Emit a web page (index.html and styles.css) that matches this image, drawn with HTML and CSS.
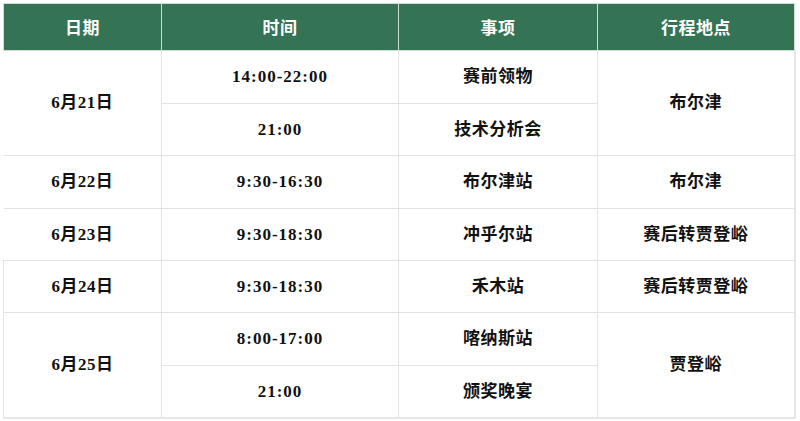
FILE: index.html
```html
<!DOCTYPE html>
<html lang="zh">
<head>
<meta charset="utf-8">
<link rel="stylesheet" href="styles.css">
</head>
<body>
<table class="schedule">
  <colgroup>
    <col class="c-date">
    <col class="c-time">
    <col class="c-item">
    <col class="c-place">
  </colgroup>
  <thead>
    <tr class="head">
      <th>日期</th>
      <th>时间</th>
      <th>事项</th>
      <th>行程地点</th>
    </tr>
  </thead>
  <tbody>
    <tr class="tall">
      <td rowspan="2" class="date">6月21日</td>
      <td class="time">14:00-22:00</td>
      <td>赛前领物</td>
      <td rowspan="2" class="place">布尔津</td>
    </tr>
    <tr>
      <td class="time">21:00</td>
      <td>技术分析会</td>
    </tr>
    <tr class="tall">
      <td class="date">6月22日</td>
      <td class="time">9:30-16:30</td>
      <td>布尔津站</td>
      <td class="place">布尔津</td>
    </tr>
    <tr>
      <td class="date">6月23日</td>
      <td class="time">9:30-18:30</td>
      <td>冲乎尔站</td>
      <td class="place">赛后转贾登峪</td>
    </tr>
    <tr>
      <td class="date edge">6月24日</td>
      <td class="time">9:30-18:30</td>
      <td>禾木站</td>
      <td class="place">赛后转贾登峪</td>
    </tr>
    <tr class="tall">
      <td rowspan="2" class="date edge last">6月25日</td>
      <td class="time">8:00-17:00</td>
      <td>喀纳斯站</td>
      <td rowspan="2" class="place last">贾登峪</td>
    </tr>
    <tr class="final">
      <td class="time">21:00</td>
      <td>颁奖晚宴</td>
    </tr>
  </tbody>
</table>
</body>
</html>
```
FILE: styles.css
```css
html, body {
  margin: 0;
  padding: 0;
  background: #ffffff;
}

body {
  padding: 3px 0 0 3px;
}

.schedule {
  border-collapse: collapse;
  table-layout: fixed;
  width: 791px;
  font-family: "Liberation Serif", "Noto Sans CJK SC", serif;
  font-size: 17px;
  font-weight: bold;
  color: #111111;
}

.c-date { width: 158px; }
.c-time { width: 237px; }
.c-item { width: 199px; }
.c-place { width: 197px; }

.head th {
  height: 46px;
  padding: 0;
  background: #347454;
  color: #ffffff;
  font-family: "Noto Sans CJK SC", sans-serif;
  font-weight: bold;
  font-size: 17px;
  line-height: 20px;
  letter-spacing: 0.5px;
  text-align: center;
  vertical-align: middle;
  border: 1px solid #cfdfd5;
}

.schedule td {
  padding: 0;
  height: 51px;
  text-align: center;
  vertical-align: middle;
  line-height: 20px;
  letter-spacing: 0.5px;
  border: 1px solid #e3e3e3;
}

.schedule tr.tall td {
  height: 52px;
}

.schedule tr.tall td[rowspan] {
  height: auto;
}

.schedule td.date {
  border-left: 0;
}

.schedule td.date.edge {
  border-left: 1px solid #e3e3e3;
}

.schedule td.time {
  letter-spacing: 1px;
}

.schedule td.place {
  border-right: 2px solid #e6e6e6;
}

.schedule tr.final td,
.schedule td.last {
  border-bottom: 2px solid #e6e6e6;
}
```
